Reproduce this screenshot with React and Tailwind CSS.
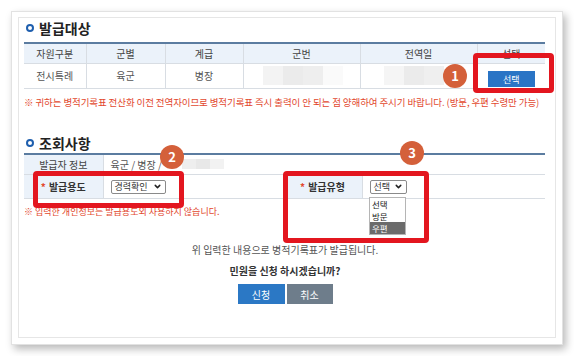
import React from 'react';
import { ChevronDown } from 'lucide-react';

const font = { fontFamily: '"Noto Sans CJK KR", "Noto Sans", sans-serif' };

const Bullet = () => (
  <span className="inline-block w-[8px] h-[8px] rounded-full border-2 border-[#1f5fae] mr-[5px]" />
);

const SectionTitle = ({ children, className }) => (
  <div className={`flex items-center h-[20px] pl-[2px] ${className}`}>
    <Bullet />
    <span className="text-[14px] font-bold text-[#222] leading-none">{children}</span>
  </div>
);

const Mosaic = ({ blocks }) => (
  <div className="flex h-[19px]">
    {blocks.map((c, i) => (
      <div key={i} className="w-[20px] h-full" style={{ background: c }} />
    ))}
  </div>
);

const FakeSelect = ({ label, w }) => (
  <div className={`${w} h-[14px] border border-[#8a8a8a] rounded-[2px] bg-white flex items-center justify-between px-[3px] text-[9px] text-[#333]`}>
    <span>{label}</span>
    <ChevronDown size={9} strokeWidth={4} className="text-[#222]" />
  </div>
);

const Badge = ({ n, className }) => (
  <div className={`absolute w-[24px] h-[24px] rounded-full bg-[#d4603a] text-white text-[13px] font-bold flex items-center justify-center ${className}`}>
    {n}
  </div>
);

const RedBox = ({ className }) => (
  <div className={`absolute border-[5px] border-[#e3161f] rounded-[4px] ${className}`} />
);

export default function App() {
  const th = 'border-r border-[#d8dde3] font-normal text-[10px] text-[#444]';
  const td = 'border-r border-[#d8dde3] text-[10px] text-[#555] text-center';
  return (
    <div className="w-[574px] h-[356px] bg-white relative overflow-hidden" style={font}>
      <div className="ml-[11px] mt-[11px] w-[552px] h-[334px] border border-[#e2e2e2] bg-white pt-[5px] px-[6px] shadow-[3px_4px_8px_rgba(0,0,0,0.28)]">
        <div className="w-[538px] h-[321px] border border-[#e6e6e6] pl-[5px] pr-[9px] flex flex-col">
          <SectionTitle className="mt-0">발급대상</SectionTitle>

          <table className="mt-[4px] w-[521px] border-collapse table-fixed border-t-2 border-[#5b7ca0]">
            <colgroup>
              <col className="w-[62px]" />
              <col className="w-[79px]" />
              <col className="w-[78px]" />
              <col className="w-[117px]" />
              <col className="w-[117px]" />
              <col className="w-[68px]" />
            </colgroup>
            <thead>
              <tr className="h-[20px] bg-[#ebf2fa] border-b border-[#d8dde3]">
                <th className={th}>자원구분</th>
                <th className={th}>군별</th>
                <th className={th}>계급</th>
                <th className={th}>군번</th>
                <th className={th}>전역일</th>
                <th className="font-normal text-[10px] text-[#444]">선택</th>
              </tr>
            </thead>
            <tbody>
              <tr className="h-[24px] border-b border-[#d8dde3]">
                <td className={td}>전시특례</td>
                <td className={td}>육군</td>
                <td className={td}>병장</td>
                <td className={td}>
                  <div className="pl-[19px]">
                    <Mosaic blocks={['#f3f3f3', '#ebebeb', '#eeeeee', '#fafafa']} />
                  </div>
                </td>
                <td className={td}>
                  <div className="pl-[23px]">
                    <Mosaic blocks={['#f5f5f5', '#ebebeb', '#efefef']} />
                  </div>
                </td>
                <td className="text-center">
                  <button className="w-[47px] h-[16px] bg-[#2a74c5] text-white text-[9px] leading-none">선택</button>
                </td>
              </tr>
            </tbody>
          </table>

          <p className="mt-[6px] h-[14px] leading-[14px] text-[9.5px] text-[#e2482e] whitespace-nowrap tracking-[-0.1px]">
            ※ 귀하는 병적기록표 전산화 이전 전역자이므로 병적기록표 즉시 출력이 안 되는 점 양해하여 주시기 바랍니다. (방문, 우편 수령만 가능)
          </p>

          <SectionTitle className="mt-[24px]">조회사항</SectionTitle>

          <table className="mt-0 w-[521px] border-collapse table-fixed border-t-2 border-[#5b7ca0]">
            <colgroup>
              <col className="w-[79px]" />
              <col className="w-[180px]" />
              <col className="w-[79px]" />
              <col className="w-[183px]" />
            </colgroup>
            <tbody>
              <tr className="h-[21px] border-b border-[#d8dde3]">
                <td className="bg-[#ebf2fa] border-r border-[#d8dde3] text-[10px] text-[#444] text-center">발급자 정보</td>
                <td colSpan={3} className="pl-[7px] text-[10px] text-[#555]">
                  <div className="flex items-center gap-[20px]">
                    <span>육군 / 병장 /</span>
                    <div className="flex h-[10px]">
                      <div className="w-[14px] bg-[#eeeeee]" />
                      <div className="w-[14px] bg-[#e8e8e8]" />
                      <div className="w-[14px] bg-[#f2f2f2]" />
                    </div>
                  </div>
                </td>
              </tr>
              <tr className="h-[24px] border-b border-[#d8dde3]">
                <td className="bg-[#ebf2fa] border-r border-[#d8dde3] text-[10px] text-[#333] text-center font-bold">
                  <span className="text-[#e2482e] mr-[3px]">*</span>발급용도
                </td>
                <td className="pl-[7px]">
                  <FakeSelect label="경력확인" w="w-[55px]" />
                </td>
                <td className="bg-[#ebf2fa] border-x border-[#d8dde3] text-[10px] text-[#333] text-center font-bold">
                  <span className="text-[#e2482e] mr-[3px]">*</span>발급유형
                </td>
                <td className="pl-[7px]">
                  <FakeSelect label="선택" w="w-[37px]" />
                </td>
              </tr>
            </tbody>
          </table>

          <p className="mt-[6px] h-[14px] leading-[14px] text-[9px] text-[#e2482e]">
            ※ 입력한 개인정보는 발급용도외 사용하지 않습니다.
          </p>

          <p className="mt-[24px] text-center text-[10px] text-[#555] leading-[14px]">
            위 입력한 내용으로 병적기록표가 발급됩니다.
          </p>
          <p className="mt-[7px] text-center text-[10px] font-bold text-[#333] leading-[14px]">
            민원을 신청 하시겠습니까?
          </p>
          <div className="mt-[6px] flex justify-center gap-[2px]">
            <button className="w-[47px] h-[20px] bg-[#2b78c5] text-white text-[10px]">신청</button>
            <button className="w-[46px] h-[20px] bg-[#6e7d8b] text-white text-[10px]">취소</button>
          </div>
        </div>
      </div>

      {/* open dropdown of 발급유형 */}
      <div className="absolute left-[369px] top-[197px] w-[37px] border border-[#b5b5b5] bg-white text-[8.5px] text-[#222]">
        <div className="px-[2px] h-[12px] leading-[12px]">선택</div>
        <div className="px-[2px] h-[12px] leading-[12px]">방문</div>
        <div className="px-[2px] h-[12px] leading-[12px] bg-[#6b6b6b] text-white">우편</div>
      </div>

      {/* annotation callouts */}
      <RedBox className="left-[473px] top-[53px] w-[81px] h-[40px]" />
      <RedBox className="left-[33px] top-[171px] w-[151px] h-[37px]" />
      <RedBox className="left-[283px] top-[171px] w-[146px] h-[72px]" />
      <Badge n="1" className="left-[443px] top-[64px]" />
      <Badge n="2" className="left-[160px] top-[145px]" />
      <Badge n="3" className="left-[400px] top-[141px]" />
    </div>
  );
}
